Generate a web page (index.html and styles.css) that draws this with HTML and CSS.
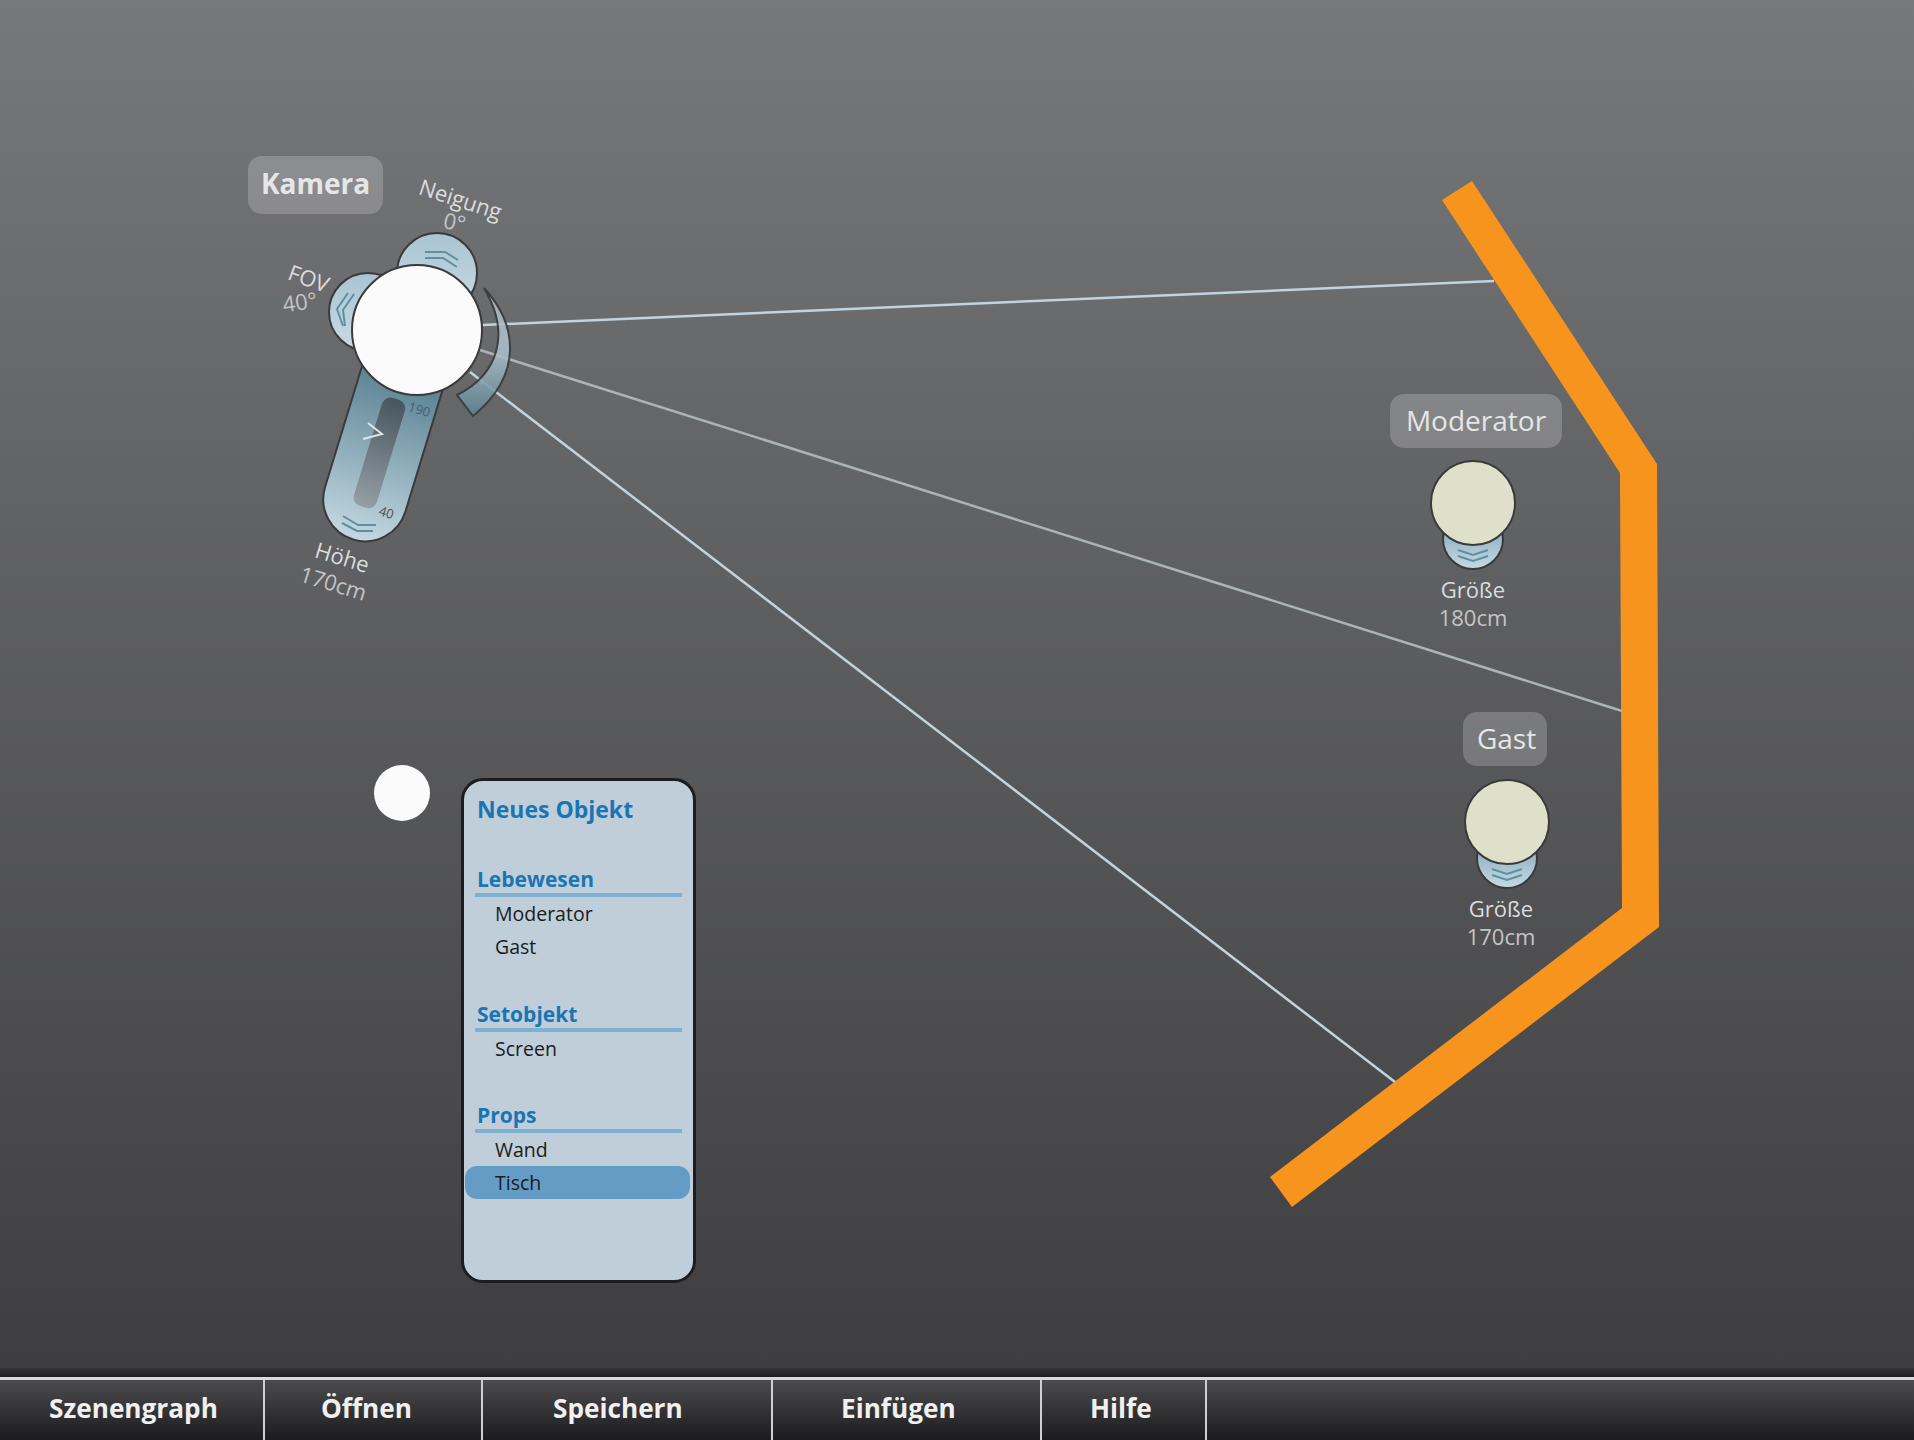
FILE: index.html
```html
<!DOCTYPE html>
<html lang="de">

<head>
    <meta charset="UTF-8">
    <title>Szenengraph</title>
    <link rel="stylesheet" href="styles.css">
</head>

<body>

    <main class="scene">
        <svg class="scene-drawing" width="1914" height="1368" viewBox="0 0 1914 1368">
            <defs>
                <linearGradient id="sliderFill" x1="0" y1="0" x2="0" y2="1">
                    <stop offset="0.25" stop-color="#5a8192"/>
                    <stop offset="1" stop-color="#c4d8e2"/>
                </linearGradient>
                <linearGradient id="slotFill" x1="0" y1="0" x2="0" y2="1">
                    <stop offset="0" stop-color="#46555e"/>
                    <stop offset="1" stop-color="#959fa5"/>
                </linearGradient>
                <linearGradient id="knobFill" x1="0" y1="0" x2="0" y2="1">
                    <stop offset="0" stop-color="#a9c4d2"/>
                    <stop offset="1" stop-color="#c9dbe4"/>
                </linearGradient>
                <linearGradient id="baseFill" x1="0" y1="0" x2="0" y2="1">
                    <stop offset="0.4" stop-color="#93b3c5"/>
                    <stop offset="1" stop-color="#c6d9e2"/>
                </linearGradient>
                <linearGradient id="arcFill" x1="0" y1="0" x2="0" y2="1">
                    <stop offset="0" stop-color="#a8bbc6"/>
                    <stop offset="0.5" stop-color="#adc0cb"/>
                    <stop offset="1" stop-color="#5c8191"/>
                </linearGradient>
                <g id="person">
                    <circle class="outline" cx="0" cy="36" r="30" fill="url(#baseFill)"/>
                    <polyline class="chevron" points="-15,47 0,52 15,47"/>
                    <polyline class="chevron" points="-15,53 0,58 15,53"/>
                    <circle class="outline" cx="0" cy="0" r="42" fill="#dfe0c9"/>
                </g>
            </defs>

            <!-- wall -->
            <polygon class="wall" points="1472,181 1657,464 1659,927 1292,1207 1270,1177 1622,908 1620,473 1442,200"/>

            <!-- view lines -->
            <line class="ray" x1="483" y1="325" x2="1494" y2="281"/>
            <line class="ray ray-mid" x1="480" y1="350" x2="1622" y2="711"/>
            <line class="ray" x1="470" y1="372" x2="1395" y2="1082"/>

            <!-- camera -->
            <circle class="outline" cx="437" cy="273" r="40" fill="url(#knobFill)"/>
            <polyline class="chevron" points="425,252 445,252 458,260"/>
            <polyline class="chevron" points="425,258 443,258 457,267"/>

            <circle class="outline" cx="368" cy="312" r="39" fill="url(#knobFill)"/>
            <polyline class="chevron" points="348,293 337,309 343,326"/>
            <polyline class="chevron" points="354,294 343,310 345,326"/>

            <g transform="translate(417 330) rotate(17)">
                <rect class="outline" x="-42" y="-10" width="84" height="229" rx="42" fill="url(#sliderFill)"/>
                <rect x="-12" y="72" width="24" height="113" rx="9" fill="url(#slotFill)"/>
            </g>
            <polyline class="slider-mark" points="368,423 382,434 363,439"/>
            <polyline class="chevron" points="343,516 358,525 376,525"/>
            <polyline class="chevron" points="342,523 357,531 373,531"/>
            <text class="scale-text scale-top" text-anchor="middle" transform="translate(418 414) rotate(17)">190</text>
            <text class="scale-text" text-anchor="middle" transform="translate(385 517) rotate(17)">40</text>

            <path class="outline arc" d="M484 288 C518 325 523 375 473 416 L457 395 C497 375 512 335 484 288 Z" fill="url(#arcFill)"/>

            <circle class="outline" cx="417" cy="330" r="65" fill="#fbfbfb"/>
            <circle cx="402" cy="793" r="28" fill="#fbfbfb"/>

            <use href="#person" x="1473" y="503"/>
            <use href="#person" x="1507" y="822"/>

            <!-- camera values -->
            <text class="value" text-anchor="middle" transform="translate(458 207) rotate(18)">Neigung</text>
            <text class="value value-dim" text-anchor="middle" transform="translate(453 230) rotate(12)">0°</text>
            <text class="value" text-anchor="middle" transform="translate(306 286) rotate(20)">FOV</text>
            <text class="value value-dim" text-anchor="middle" transform="translate(301 310) rotate(-8)">40°</text>
            <text class="value" text-anchor="middle" transform="translate(340 565) rotate(17)">Höhe</text>
            <text class="value value-dim" text-anchor="middle" transform="translate(331 591) rotate(17)">170cm</text>

            <text class="value" text-anchor="middle" x="1473" y="598">Größe</text>
            <text class="value value-dim" text-anchor="middle" x="1473" y="626">180cm</text>
            <text class="value" text-anchor="middle" x="1501" y="917">Größe</text>
            <text class="value value-dim" text-anchor="middle" x="1501" y="945">170cm</text>
        </svg>

        <div class="tag tag-camera">Kamera</div>
        <div class="tag tag-moderator">Moderator</div>
        <div class="tag tag-guest">Gast</div>

        <aside class="object-panel">
            <h2>Neues Objekt</h2>

            <section class="object-group">
                <h3>Lebewesen</h3>
                <ul>
                    <li>Moderator</li>
                    <li>Gast</li>
                </ul>
            </section>

            <section class="object-group">
                <h3>Setobjekt</h3>
                <ul>
                    <li>Screen</li>
                </ul>
            </section>

            <section class="object-group">
                <h3>Props</h3>
                <ul>
                    <li>Wand</li>
                    <li class="selected">Tisch</li>
                </ul>
            </section>
        </aside>
    </main>

    <div class="menu-shadow"></div>

    <nav class="menu-bar">
        <a class="menu-scene">Szenengraph</a>
        <a class="menu-open">Öffnen</a>
        <a class="menu-save">Speichern</a>
        <a class="menu-insert">Einfügen</a>
        <a class="menu-help">Hilfe</a>
    </nav>

</body>
</html>
```

FILE: styles.css
```css
body {
    font-family: "Open Sans", "Liberation Sans", sans-serif;
    margin: 0;
    width: 1914px;
    height: 1440px;
    overflow: hidden;
    display: flex;
    flex-direction: column;
    background-color: #3c3c3e;
}

.scene {
    position: relative;
    height: 1368px;
    background: linear-gradient(#77787a, #3e3e40);
}

.scene-drawing {
    display: block;
}

.outline {
    stroke: #3a3a3c;
    stroke-width: 2;
}

.wall {
    fill: #f7941e;
}

.ray {
    stroke: #c3d3de;
    stroke-width: 2.5;
}

.ray-mid {
    stroke: #aeb3b8;
}

.arc {
    opacity: 0.88;
}

.chevron {
    fill: none;
    stroke: #60909e;
    stroke-width: 2;
}

.slider-mark {
    fill: none;
    stroke: #dfe3e6;
    stroke-width: 2;
}

.scale-text {
    font-size: 13px;
    fill: #4c4f52;
}

.scale-top {
    fill: #46606d;
}

.value {
    font-size: 22px;
    fill: #dcdcdc;
}

.value-dim {
    fill: #c4c4c4;
}

.tag {
    position: absolute;
    box-sizing: border-box;
    height: 54px;
    line-height: 52px;
    text-align: center;
    font-size: 28px;
    color: #e6e6e6;
    background-color: rgba(255, 255, 255, 0.2);
    border-radius: 14px;
}

.tag-camera {
    left: 248px;
    top: 156px;
    width: 135px;
    height: 58px;
    line-height: 55px;
    font-weight: 700;
}

.tag-moderator {
    left: 1390px;
    top: 394px;
    width: 172px;
}

.tag-guest {
    left: 1463px;
    top: 712px;
    width: 84px;
    padding-left: 3px;
}

.object-panel {
    position: absolute;
    left: 461px;
    top: 778px;
    box-sizing: border-box;
    width: 235px;
    height: 505px;
    background-color: #bfced9;
    border: 3px solid #1d1d1f;
    border-radius: 22px;
}

.object-panel h2 {
    margin: 11px 0 39px 13px;
    font-size: 23px;
    line-height: 34px;
    font-weight: 700;
    color: #1a75b5;
}

.object-group {
    margin-top: 36.5px;
}

.object-group:first-of-type {
    margin-top: 0;
}

.object-group h3 {
    margin: 0 11px 0 11px;
    padding-left: 2px;
    font-size: 21px;
    line-height: 28px;
    font-weight: 700;
    color: #1a75b5;
    border-bottom: 4px solid #7fb0d2;
}

.object-group ul {
    list-style: none;
    margin: 0;
    padding: 0;
}

.object-group li {
    margin: 0 3px 0 1px;
    padding-left: 30px;
    height: 33px;
    line-height: 33px;
    font-size: 19.5px;
    color: #1b1b1d;
}

.object-group li.selected {
    background-color: #659cc6;
    border-radius: 12px;
}

.menu-shadow {
    height: 9px;
    background: linear-gradient(#343436, #1e1e20);
}

.menu-bar {
    flex: 1;
    display: grid;
    grid-template-columns: 265px 218px 290px 269px 165px;
    background: linear-gradient(#4b4b4d, #1c1c1e);
    border-top: 3px solid #d8d8d8;
}

.menu-bar a {
    box-sizing: border-box;
    border-right: 2px solid #d0d0d0;
    font-size: 26.2px;
    font-weight: 700;
    line-height: 57px;
    color: #f0f0f0;
}

.menu-scene {
    padding-left: 49px;
}

.menu-open {
    padding-left: 56px;
}

.menu-save {
    padding-left: 70px;
}

.menu-insert {
    padding-left: 68px;
}

.menu-help {
    padding-left: 48px;
}
```
